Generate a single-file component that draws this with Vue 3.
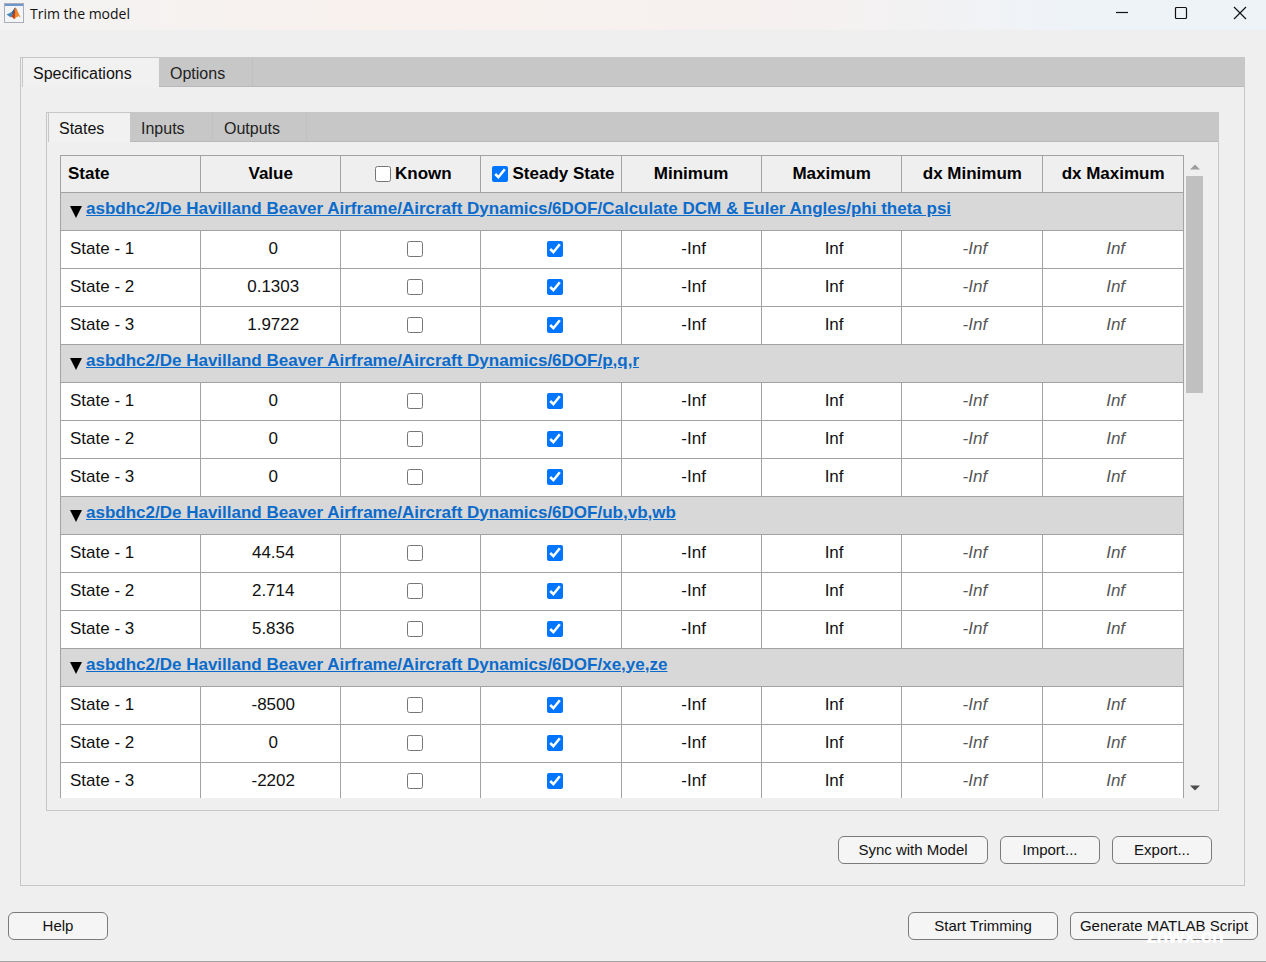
<script setup>
import { reactive } from 'vue'

const columns = ['Minimum', 'Maximum', 'dx Minimum', 'dx Maximum']
const base = 'asbdhc2/De Havilland Beaver Airframe/Aircraft Dynamics/6DOF/'
const groups = reactive([
  { path: 'Calculate DCM & Euler Angles/phi theta psi', values: ['0', '0.1303', '1.9722'] },
  { path: 'p,q,r', values: ['0', '0', '0'] },
  { path: 'ub,vb,wb', values: ['44.54', '2.714', '5.836'] },
  { path: 'xe,ye,ze', values: ['-8500', '0', '-2202'] },
])
</script>

<template>
  <div class="window">
    <header class="titlebar">
      <svg class="logo" width="20" height="20" viewBox="0 0 20 20" aria-hidden="true">
        <rect x=".5" y=".5" width="19" height="19" fill="#f3f5f9" stroke="#a9adba" />
        <rect x="1" y="1" width="18" height="2" fill="#6d96cb" />
        <path d="M2.5 11.5 L7 9.5 L9 12 L6.5 14.2 Z" fill="#4388bd" />
        <path d="M7 9.5 C9 8.6 9.6 5.5 11.3 4.6 L9.2 12 Z" fill="#285b86" />
        <path d="M11.3 4.6 C10 8 9.5 12 6.5 14.2 C8.3 13.4 9.2 15 10 16.2 C11.8 15.5 12 13 13.8 13.4 L12.4 6 Z" fill="#b83d1e" />
        <path d="M11.3 4.6 C13.3 6 14.8 12 17 14.8 C15.5 13.6 14.8 13 13.8 13.4 C11.7 13.5 12 15.5 10 16.2 C11.7 12 11 8 11.3 4.6 Z" fill="#ef8b2c" />
      </svg>
      <h1>Trim the model</h1>
      <div class="controls">
        <button aria-label="Minimize"><svg width="14" height="14" viewBox="0 0 14 14"><path d="M1 6.5H13" /></svg></button>
        <button aria-label="Maximize"><svg width="14" height="14" viewBox="0 0 14 14"><rect x="1.5" y="1.5" width="11" height="11" rx="1" /></svg></button>
        <button aria-label="Close"><svg width="14" height="14" viewBox="0 0 14 14"><path d="M1 1L13 13M13 1L1 13" /></svg></button>
      </div>
    </header>

    <main class="panel outer">
      <nav class="tabs" role="tablist">
        <button class="tab active spec" role="tab" aria-selected="true">Specifications</button>
        <button class="tab options" role="tab">Options</button>
      </nav>
      <section class="panel inner">
        <nav class="tabs" role="tablist">
          <button class="tab active states" role="tab" aria-selected="true">States</button>
          <button class="tab inputs" role="tab">Inputs</button>
          <button class="tab outputs" role="tab">Outputs</button>
        </nav>
        <div class="content">
          <div class="view">
            <table>
              <colgroup>
                <col v-for="n in 5" :key="n" class="narrow" />
                <col span="3" />
              </colgroup>
              <thead>
                <tr>
                  <th class="first">State</th>
                  <th>Value</th>
                  <th class="toggle"><label><input type="checkbox" />Known</label></th>
                  <th class="toggle"><label><input type="checkbox" checked />Steady State</label></th>
                  <th v-for="c in columns" :key="c">{{ c }}</th>
                </tr>
              </thead>
              <tbody v-for="g in groups" :key="g.path">
                <tr class="group">
                  <td colspan="8">
                    <div class="path">
                      <svg width="12" height="12" viewBox="0 0 12 12" aria-hidden="true"><path d="M0 0H12L6 12Z" /></svg>
                      <a href="#">{{ base + g.path }}</a>
                    </div>
                  </td>
                </tr>
                <tr v-for="(v, i) in g.values" :key="i">
                  <td class="first">State - {{ i + 1 }}</td>
                  <td>{{ v }}</td>
                  <td class="check"><input type="checkbox" aria-label="Known" /></td>
                  <td class="check"><input type="checkbox" checked aria-label="Steady State" /></td>
                  <td>-Inf</td>
                  <td>Inf</td>
                  <td class="dx">-Inf</td>
                  <td class="dx">Inf</td>
                </tr>
              </tbody>
            </table>
          </div>
          <div class="scrollbar" aria-hidden="true">
            <svg width="10" height="6" viewBox="0 0 10 6"><path d="M0 5.500L5 .5L10 5.500Z" fill="#9d9d9d" /></svg>
            <div class="track"><div class="thumb"></div></div>
            <svg width="10" height="6" viewBox="0 0 10 6"><path d="M0 .5H10L5 5.500Z" fill="#4d4d4d" /></svg>
          </div>
        </div>
      </section>
      <div class="actions">
        <button class="btn wide">Sync with Model</button>
        <button class="btn">Import...</button>
        <button class="btn">Export...</button>
      </div>
    </main>

    <footer class="footer">
      <button class="btn">Help</button>
      <span class="spacer"></span>
      <button class="btn wide">Start Trimming</button>
      <button class="btn script">Generate MATLAB Script</button>
      <span class="watermark">znwx.cn</span>
    </footer>
  </div>
</template>

<style>
body { margin: 0; background: #efefef; }
</style>

<style scoped>
* { box-sizing: border-box; }
button { font: inherit; color: inherit; margin: 0; }
.window {
  height: 100vh;
  min-height: 480px;
  display: flex;
  flex-direction: column;
  background: #efefef;
  border-bottom: 1px solid #a3a3a3;
  color: #111;
  font-family: "Liberation Sans", Arial, sans-serif;
  font-size: 16px;
  overflow: hidden;
}
.titlebar {
  flex: none;
  height: 30px;
  display: flex;
  align-items: flex-start;
  padding: 3px 11px 0 4px;
  background: linear-gradient(90deg, #f3f3f3, #f8f1ee 30%, #f5f1f0 65%, #eef3f8 85%, #eef3f8);
}
.logo { flex: none; }
h1 {
  margin: 0 auto 0 6px;
  font: 400 14px/22px "Open Sans", "Noto Sans", sans-serif;
}
.controls { display: flex; gap: 29px; }
.controls button { width: 30px; height: 20px; padding: 0; border: 0; background: none; display: flex; align-items: center; justify-content: center; }
.controls svg { fill: none; stroke: #111; stroke-width: 1.2; }
.panel { display: flex; flex-direction: column; border: 1px solid #c6c6c6; min-height: 0; flex: 1; }
.outer { margin: 27px 21px 0 20px; }
.inner { margin: 25px 25px 0 25px; }
.tabs { flex: none; display: flex; height: 29px; background: #c7c7c7; border-bottom: 1px solid #b9b9b9; padding-left: 1px; }
.tab { border: 0; border-right: 1px solid #c0c0c0; background: none; text-align: left; padding: 4px 0 0 11px; height: 28px; line-height: 24px; color: #222; }
.tab.active { background: #f1f1f1; height: 29px; border-right: 0; border-left: 1px solid #c6c6c6; box-shadow: -1px 0 0 #efefef; padding: 2px 0 0 10px; color: #111; }
.spec { width: 137px; }
.options { width: 94px; }
.states { width: 82px; }
.inputs { width: 83px; }
.outputs { width: 94px; }
.content { flex: 1; min-height: 0; display: flex; margin: 13px 14px 12px 13px; }
.view { flex: 1; min-width: 0; overflow: hidden; }
table { width: 100%; border-collapse: collapse; table-layout: fixed; font-size: 17px; line-height: 18px; }
.narrow { width: 12.48%; }
th, td { border: 1px solid #a3a3a3; text-align: center; padding: 0; white-space: nowrap; }
th { height: 37px; font-weight: 700; color: #000; }
.toggle { padding-left: 5px; }
th label { display: inline-flex; align-items: center; gap: 4px; vertical-align: middle; }
td { height: 38px; background: #fff; padding: 0 0 2px 5px; }
.first { text-align: left; }
th.first { padding-left: 7px; }
td.first { padding-left: 9px; }
td.check { padding: 0 0 2px 9px; }
input { width: 16px; height: 16px; margin: 0; vertical-align: middle; }
.dx { font-style: italic; color: #555; }
.group td { background: #d8d8d8; text-align: left; padding: 0 0 6px 9px; }
.path { display: flex; align-items: center; gap: 4px; }
.path svg { margin-top: 7px; }
a { font-weight: 700; color: #0b6bcb; text-decoration: underline; }
.scrollbar { width: 21px; margin: 9px -1px 7px 0; display: flex; flex-direction: column; align-items: center; }
.track { flex: 1; width: 17px; margin: 6px 0; }
.thumb { height: 36%; background: #c0c0c0; }
.actions { flex: none; display: flex; justify-content: flex-end; gap: 12px; padding: 25px 32px 21px 0; }
.btn { width: 100px; height: 28px; border: 1px solid #7b7b7b; border-radius: 6px; background: #f5f5f5; font-size: 15px; line-height: 25px; padding: 0 0 1px; color: #111; white-space: nowrap; }
.wide { width: 150px; }
.script { width: 188px; }
.footer { flex: none; position: relative; display: flex; gap: 12px; padding: 26px 8px 21px; }
.spacer { flex: 1; }
.watermark { position: absolute; right: 42px; bottom: 15px; color: #fff; font-size: 20px; font-weight: 700; line-height: 20px; pointer-events: none; }
</style>
